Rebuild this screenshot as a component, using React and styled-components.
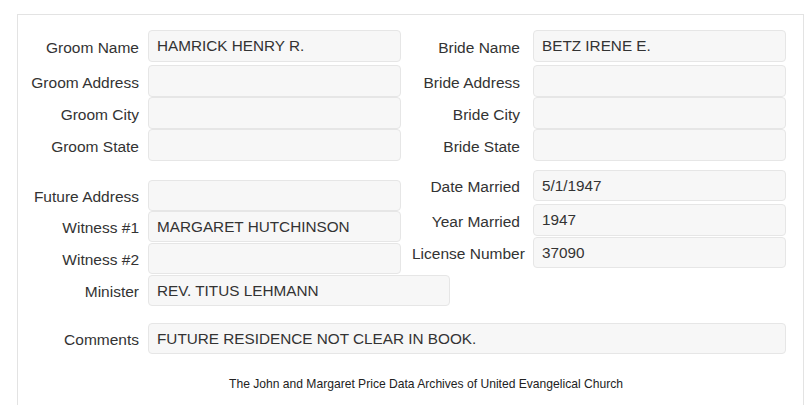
import React from 'react';
import styled, { createGlobalStyle } from 'styled-components';

const Global = createGlobalStyle`
  body {
    margin: 0;
    background: #fff;
    font-family: "Liberation Sans", Arial, sans-serif;
    color: #333;
  }
`;

const Panel = styled.div`
  box-sizing: border-box;
  width: 787px;
  margin: 14px 0 0 17px;
  padding: 15px 0 20px 10px;
  border: 1px solid #e3e3e3;
  border-bottom: none;
`;

const Section = styled.div`
  display: grid;
  grid-template-columns: 384px 373px;
  align-items: start;
  margin-top: ${p => p.top || 0}px;
`;

const Column = styled.div`
  display: flex;
  flex-direction: column;
  padding-top: ${p => p.offset || 0}px;
`;

const Field = styled.div`
  display: flex;
  align-items: center;
  margin-top: ${p => p.gap || 0}px;
`;

const Label = styled.label`
  flex: none;
  width: ${p => p.w}px;
  margin-right: ${p => p.space}px;
  text-align: right;
  white-space: nowrap;
  font-size: 15.5px;
  color: #333;
  padding-top: 3px;
`;

const Value = styled.div`
  box-sizing: border-box;
  flex: none;
  width: ${p => p.w || 253}px;
  height: ${p => p.h || 31}px;
  padding: 6px 8px 0;
  background: #f7f7f7;
  border: 1px solid #e6e6e6;
  border-radius: 4px;
  font-size: 15.3px;
  color: #333;
  white-space: nowrap;
`;

const Footer = styled.div`
  margin-top: 23px;
  margin-left: 21px;
  text-align: center;
  font-size: 12.1px;
  color: #222;
`;

const LEFT = { w: 111, space: 9 };
const RIGHT = { w: 108, space: 13 };

function Row({ label, value, side, gap, w, h }) {
  const s = side === 'right' ? RIGHT : LEFT;
  return (
    <Field gap={gap}>
      <Label w={s.w} space={s.space}>{label}</Label>
      <Value w={w} h={h}>{value}</Value>
    </Field>
  );
}

export default function App() {
  return (
    <>
      <Global />
      <Panel>
        <Section>
          <Column>
            <Row label="Groom Name" value="HAMRICK HENRY R." h={32} />
            <Row label="Groom Address" value="" gap={3} h={32} />
            <Row label="Groom City" value="" h={32} />
            <Row label="Groom State" value="" h={32} />
          </Column>
          <Column>
            <Row side="right" label="Bride Name" value="BETZ IRENE E." h={32} />
            <Row side="right" label="Bride Address" value="" gap={3} h={32} />
            <Row side="right" label="Bride City" value="" h={32} />
            <Row side="right" label="Bride State" value="" h={32} />
          </Column>
        </Section>
        <Section top={9}>
          <Column offset={10}>
            <Row label="Future Address" value="" />
            <Row label="Witness #1" value="MARGARET HUTCHINSON" />
            <Row label="Witness #2" value="" gap={1} />
            <Row label="Minister" value="REV. TITUS LEHMANN" w={302} gap={1} />
          </Column>
          <Column>
            <Row side="right" label="Date Married" value="5/1/1947" />
            <Row side="right" label="Year Married" value="1947" gap={3} h={32} />
            <Row side="right" label="License Number" value="37090" gap={1} />
          </Column>
        </Section>
        <Section top={17} style={{ display: 'block' }}>
          <Row label="Comments" value="FUTURE RESIDENCE NOT CLEAR IN BOOK." w={638} />
        </Section>
        <Footer>The John and Margaret Price Data Archives of United Evangelical Church</Footer>
      </Panel>
    </>
  );
}
